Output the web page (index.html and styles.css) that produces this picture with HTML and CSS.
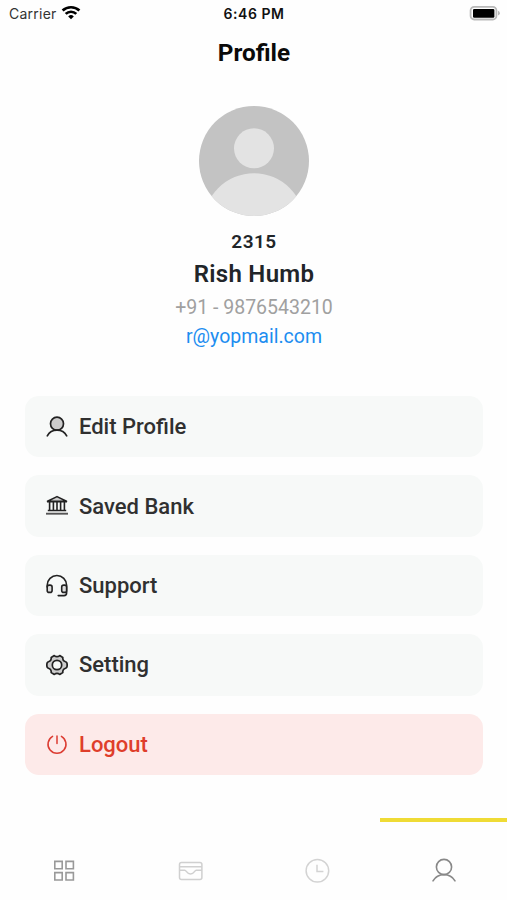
FILE: index.html
```html
<!DOCTYPE html>
<html lang="en">
<head>
<meta charset="utf-8">
<title>Profile</title>
<link rel="stylesheet" href="styles.css">
</head>
<body>
<div class="screen">
  <header class="status">
    <div class="carrier">
      <span>Carrier</span>
      <svg width="20" height="15" viewBox="0 0 20 15"><g fill="none" stroke="#000" stroke-width="2.7"><path d="M1.6 5.6a12.2 12.2 0 0 1 16.8 0"/><path d="M4.7 8.9a7.6 7.6 0 0 1 10.6 0"/></g><path d="M10 14.2l-2.8-2.8a4 4 0 0 1 5.6 0z"/></svg>
    </div>
    <time class="clock">6:46 PM</time>
    <svg class="battery" width="32" height="16" viewBox="0 0 32 16"><rect x="1.6" y="1.9" width="25.8" height="12.6" rx="3.6" fill="#fff" stroke="#b9b9b9" stroke-width="1.8"/><rect x="4" y="3.9" width="21.4" height="8.8" rx="1.2"/><path d="M29 5.8q1.9.9 1.9 2.4t-1.9 2.4z" fill="#b9b9b9"/></svg>
  </header>
  <h1 class="title">Profile</h1>
  <section class="user">
    <svg class="avatar" width="110" height="110" viewBox="0 0 110 110"><defs><clipPath id="disc"><circle cx="55" cy="55" r="55"/></clipPath></defs><g clip-path="url(#disc)"><path fill="#c3c3c3" d="M0 0h110v110H0z"/><circle cx="55" cy="42.3" r="20" fill="#e3e3e3"/><circle cx="55" cy="117.6" r="50.4" fill="#e3e3e3"/></g></svg>
    <p class="code">2315</p>
    <p class="name">Rish Humb</p>
    <p class="phone">+91 - 9876543210</p>
    <a class="email">r@yopmail.com</a>
  </section>
  <main class="menu">
    <div class="item">
      <svg width="24" height="24" viewBox="0 0 24 24" fill="none" stroke="#222" stroke-width="1.7" stroke-linecap="round"><circle cx="12" cy="8.7" r="6.5" fill="#ccc"/><path d="M2.3 20.8C4.2 17.2 7.7 15.2 12 15.2s7.8 2 9.7 5.6"/></svg>
      <span>Edit Profile</span>
    </div>
    <div class="item">
      <svg width="24" height="24" viewBox="0 0 24 24" fill="none" stroke="#222" stroke-width="1.6" stroke-linejoin="round"><path d="M2.5 7.3L12 2.6l9.5 4.7z" fill="#ccc"/><path d="M2 7.8h20M4.6 8v8.500M8.400 8v8.500M12 8v8.500M15.600 8v8.500M19.400 8v8.500M2.800 16.500h18.400"/><path d="M1 19.700h22" stroke="#555" stroke-width="1.900"/></svg>
      <span>Saved Bank</span>
    </div>
    <div class="item">
      <svg width="24" height="24" viewBox="0 0 24 24" fill="none" stroke="#222" stroke-width="1.6" stroke-linecap="round" stroke-linejoin="round"><path d="M2.2 14v-1.8a9.7 9.7 0 0 1 19.4 0v7.8q0 2.6-2.6 2.6h-5.8"/><rect x="2.2" y="12.1" width="4.9" height="7.3" rx="2" fill="#ddd"/><rect x="16.7" y="12.1" width="4.9" height="7.3" rx="2" fill="#ddd"/></svg>
      <span>Support</span>
    </div>
    <div class="item">
      <svg width="24" height="24" viewBox="0 0 24 24" fill="#ccc" stroke="#222" stroke-width="1.7" stroke-linejoin="round"><path d="M9.3 2.6Q12 4.8 14.7 2.6L17.8 4.4Q17.4 7.8 20.6 8.8Q22.2 9.2 22.2 12Q22.2 14.8 20.6 15.2Q17.4 16.2 17.8 19.6L14.7 21.4Q12 19.2 9.3 21.4L6.2 19.6Q6.6 16.2 3.4 15.2Q1.8 14.8 1.8 12Q1.8 9.2 3.4 8.8Q6.6 7.8 6.2 4.4Z"/><circle cx="12" cy="12" r="4.7" fill="#f7f9f8"/></svg>
      <span>Setting</span>
    </div>
    <div class="item danger">
      <svg width="24" height="24" viewBox="0 0 24 24" fill="none" stroke="#dc3c32" stroke-width="1.5" stroke-linecap="round"><path d="M7.6 4.4a9 9 0 1 0 8.8 0M12 3.9v7.6"/></svg>
      <span>Logout</span>
    </div>
  </main>
  <nav class="tabs">
    <div class="tab"><svg width="26" height="26" viewBox="0 0 26 26" fill="none" stroke="#999" stroke-width="1.6"><path d="M4.8 3.4h7.4v7.4H4.8zM16 3.4h7.4v7.4H16zM4.8 14.6h7.4V22H4.8zM16 14.6h7.4V22H16z"/></svg></div>
    <div class="tab"><svg width="26" height="26" viewBox="0 0 26 26" fill="none" stroke="#d0d0d0" stroke-width="1.5"><rect x="2.5" y="4.5" width="22.4" height="17" rx="2"/><path d="M2.5 8.7h22.4M2.5 12.3h5.2c2 0 1.8 3.6 5.8 3.6s3.8-3.6 5.8-3.6h5.6"/></svg></div>
    <div class="tab"><svg width="26" height="26" viewBox="0 0 26 26" fill="none" stroke="#d3d3d3" stroke-width="1.5"><circle cx="13.4" cy="12.7" r="11.3"/><path d="M13 6.7v6.8h6.4"/></svg></div>
    <div class="tab active"><svg width="26" height="26" viewBox="0 0 26 26" fill="none" stroke="#888" stroke-width="1.6" stroke-linecap="round"><circle cx="13" cy="9" r="7.6"/><path d="M2 22.8C4.5 18.6 8.4 16.6 13 16.6s8.5 2 11 6.2"/></svg></div>
  </nav>
</div>
</body>
</html>
```
FILE: styles.css
```css
* { box-sizing: border-box; }
body { margin: 0; background: #fefefe; font-family: Roboto, sans-serif; }
p, h1 { margin: 0; white-space: nowrap; }
svg { display: block; flex: none; }
.screen { width: 507px; height: 900px; display: flex; flex-direction: column; overflow: hidden; }
.status { height: 27px; display: grid; grid-template-columns: 1fr auto 1fr; align-items: center; padding: 0 6px 0 9px; font-family: Inter, sans-serif; font-size: 14px; }
.carrier { display: flex; align-items: center; gap: 4px; color: #333; letter-spacing: .25px; }
.carrier svg { margin-top: -3px; }
.clock { font-weight: 600; color: #111; font-size: 14px; letter-spacing: .55px; margin-left: -2px; }
.battery { justify-self: end; margin-top: -1px; }
.title { height: 52px; line-height: 52px; text-align: center; font-size: 24.3px; font-weight: 700; color: #0a0a0a; padding-left: 1px; }
.user { margin-top: 27px; padding-left: 1px; display: flex; flex-direction: column; align-items: center; }
.code { margin-top: 12px; line-height: 28px; font-size: 19px; font-weight: 600; color: #212529; letter-spacing: .5px; }
.name { line-height: 36px; font-size: 24px; font-weight: 600; color: #212529; letter-spacing: .3px; }
.phone { line-height: 31px; font-size: 19.5px; color: #a0a0a0; }
.email { line-height: 28px; font-size: 19.5px; color: #1c8df0; }
.menu { margin: 45px 24px 0 25px; display: flex; flex-direction: column; gap: 18px; }
.item { height: 61.4px; border-radius: 14px; background: #f7f9f8; display: flex; align-items: center; gap: 10px; padding-left: 20px; font-size: 22px; font-weight: 500; color: #303030; }
.danger { background: #fdeae9; color: #df3e2b; }
.tabs { margin-top: 43px; flex: 1; display: grid; grid-template-columns: repeat(4, 1fr); }
.tab { display: flex; justify-content: center; padding-top: 36px; border-top: 4px solid transparent; }
.active { border-top-color: #efdb35; }
```
